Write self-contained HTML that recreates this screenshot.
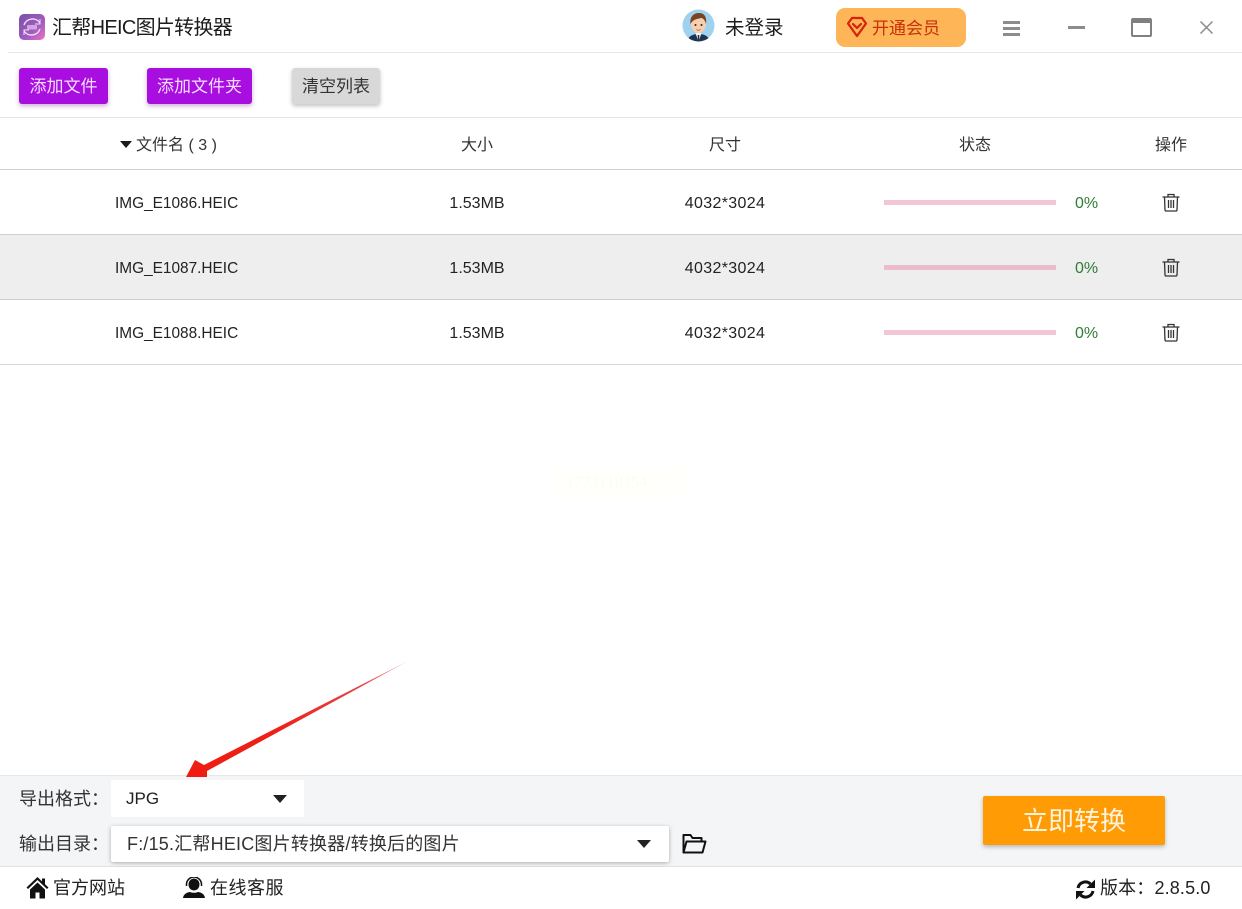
<!DOCTYPE html>
<html lang="zh">
<head>
<meta charset="utf-8">
<title>汇帮HEIC图片转换器</title>
<style>
html,body{margin:0;padding:0;background:#fff;}
#app{position:relative;width:1242px;height:909px;overflow:hidden;background:#fff;font-family:"Liberation Sans","Noto Sans CJK SC",sans-serif;color:#222;}
#app div,#app span,#app svg{position:absolute;}
.t{white-space:nowrap;line-height:24px;height:24px;}
.c{text-align:center;}
.line{left:0;width:1242px;height:1px;background:#d4d4d4;}
.btn{border-radius:3px;text-align:center;white-space:nowrap;}
.p{background:#a80ee0;color:#f6dcff;top:68px;height:36px;line-height:37px;font-size:17px;box-shadow:0 2px 5px rgba(120,60,150,.4);}
.bar{left:884px;width:172px;height:5px;background:#f2c6d6;}
.pct{left:1075px;width:26px;color:#2e7d32;font-size:16px;}
.name{left:115px;font-size:15.4px;}
.size{left:427px;width:100px;font-size:16px;}
.dim{left:675px;width:100px;font-size:16px;letter-spacing:.35px;}
.h{font-size:16px;color:#333;top:134px;}
</style>
</head>
<body>
<div id="app">
  <!-- Title bar -->
  <svg style="left:19px;top:14px" width="27" height="27" viewBox="0 0 27 27">
    <defs><linearGradient id="lg" x1="0" y1="0" x2="1" y2="1"><stop offset="0" stop-color="#7a4fa8"/><stop offset=".6" stop-color="#a35cc0"/><stop offset="1" stop-color="#ee74c4"/></linearGradient></defs>
    <rect width="26" height="26" rx="5" fill="url(#lg)"/>
    <path d="M5 11A9 9 0 0 1 21 9M21 15A9 9 0 0 1 5 17" fill="none" stroke="#f2e2f6" stroke-width="1.4"/>
    <path d="M21 5v5h-5M5 21v-5h5" fill="none" stroke="#f2e2f6" stroke-width="1"/>
    <rect x="8" y="11" width="10" height="4.500" rx="1" fill="#e6c9ee" opacity=".7"/>
  </svg>
  <div class="t" style="left:52px;top:16px;font-size:20px;color:#1c1c1c;letter-spacing:-.7px">汇帮HEIC图片转换器</div>

  <svg style="left:682px;top:9px" width="34" height="34" viewBox="0 0 34 34">
    <clipPath id="cp"><circle cx="16.500" cy="16.500" r="16"/></clipPath>
    <circle cx="16.500" cy="16.500" r="16" fill="#9fd2ee"/>
    <g clip-path="url(#cp)">
      <path d="M5 33c1-6 6-8 11.500-8S27 27 28 33z" fill="#1d3350"/>
      <path d="M13.500 24h6l-3 9z" fill="#f4f4f4"/>
      <rect x="15.700" y="26" width="1.600" height="7" fill="#1d3350"/>
      <ellipse cx="16.500" cy="15" rx="7.500" ry="9" fill="#f6cfae"/>
      <path d="M8.500 15c-1-7 3-11 8.500-11s8 4 7 11c-1-4-3-6-5-6-3 1-8 1-10.500 6z" fill="#7a4326"/>
      <circle cx="13.500" cy="16" r="1" fill="#3a2418"/><circle cx="19.500" cy="16" r="1" fill="#3a2418"/>
      <path d="M14.500 20.500q2 1.500 4 0" fill="none" stroke="#c0694f" stroke-width="1"/>
    </g>
  </svg>
  <div class="t" style="left:725px;top:16px;font-size:19.500px;color:#1c1c1c">未登录</div>

  <div style="left:836px;top:8px;width:130px;height:39px;background:#fdb557;border-radius:9px"></div>
  <svg style="left:847px;top:16px" width="20" height="22" viewBox="0 0 20 22">
    <path d="M5 2h10l4 5.500L10 20 1 7.500z" fill="none" stroke="#d8200c" stroke-width="2.200" stroke-linejoin="round"/>
    <path d="M6 8l4 4 4-4" fill="none" stroke="#d8200c" stroke-width="2.200" stroke-linecap="round" stroke-linejoin="round"/>
  </svg>
  <div class="t" style="left:872px;top:17px;font-size:17px;color:#c8300a">开通会员</div>

  <div style="left:1003px;top:21px;width:17px;height:2.500px;background:#8c8c8c"></div>
  <div style="left:1003px;top:27px;width:17px;height:2.500px;background:#8c8c8c"></div>
  <div style="left:1003px;top:33px;width:17px;height:2.500px;background:#8c8c8c"></div>
  <div style="left:1068px;top:26px;width:17px;height:2.500px;background:#8c8c8c"></div>
  <div style="left:1131px;top:18px;width:17px;height:12px;border:2px solid #808080;border-top:5px solid #808080;border-radius:2px"></div>
  <svg style="left:1199px;top:20px" width="15" height="15" viewBox="0 0 15 15"><path d="M1.500 1.500l12 12M13.500 1.500l-12 12" stroke="#8a8a8a" stroke-width="1.500" fill="none"/></svg>

  <div style="left:8px;top:52px;width:1234px;height:1px;background:#e6e6e6"></div>

  <!-- Toolbar -->
  <div class="btn p" style="left:19px;width:89px">添加文件</div>
  <div class="btn p" style="left:147px;width:105px">添加文件夹</div>
  <div class="btn" style="left:292px;top:68px;width:88px;height:36px;line-height:37px;font-size:17px;background:#d8d8d8;color:#333;box-shadow:0 2px 4px rgba(0,0,0,.25)">清空列表</div>

  <div class="line" style="top:117px;background:#e4e4e4"></div>

  <!-- Table header -->
  <svg style="left:120px;top:141px" width="12" height="7" viewBox="0 0 12 7"><path d="M0 0h12L6 7z" fill="#1a1a1a"/></svg>
  <div class="t h" style="left:136px">文件名 ( 3 )</div>
  <div class="t h c" style="left:427px;width:100px">大小</div>
  <div class="t h c" style="left:675px;width:100px">尺寸</div>
  <div class="t h c" style="left:925px;width:100px">状态</div>
  <div class="t h c" style="left:1121px;width:100px">操作</div>
  <div class="line" style="top:169px;background:#cfcfcf"></div>

  <!-- Row 1 -->
  <div class="t name" style="top:192px">IMG_E1086.HEIC</div>
  <div class="t c size" style="top:192px">1.53MB</div>
  <div class="t c dim" style="top:192px">4032*3024</div>
  <div class="bar" style="top:200px"></div>
  <div class="t pct" style="top:192px">0%</div>
  <svg style="left:1162px;top:193px" width="18" height="19" viewBox="0 0 18 19"><path d="M.5 4h17M6 4V1.500h6V4M2.500 4l.5 13a1.200 1.200 0 0 0 1.200 1h9.600a1.200 1.200 0 0 0 1.200-1l.5-13M6.500 7v8M9 7v8M11.500 7v8" fill="none" stroke="#333" stroke-width="1.300"/></svg>
  <div class="line" style="top:234px;background:#cfcfcf"></div>

  <!-- Row 2 -->
  <div style="left:0;top:235px;width:1242px;height:64px;background:#eeeeee"></div>
  <div class="t name" style="top:257px">IMG_E1087.HEIC</div>
  <div class="t c size" style="top:257px">1.53MB</div>
  <div class="t c dim" style="top:257px">4032*3024</div>
  <div class="bar" style="top:265px;background:#ecbccd"></div>
  <div class="t pct" style="top:257px">0%</div>
  <svg style="left:1162px;top:258px" width="18" height="19" viewBox="0 0 18 19"><path d="M.5 4h17M6 4V1.500h6V4M2.500 4l.5 13a1.200 1.200 0 0 0 1.200 1h9.600a1.200 1.200 0 0 0 1.200-1l.5-13M6.500 7v8M9 7v8M11.500 7v8" fill="none" stroke="#333" stroke-width="1.300"/></svg>
  <div class="line" style="top:299px;background:#cfcfcf"></div>

  <!-- Row 3 -->
  <div class="t name" style="top:322px">IMG_E1088.HEIC</div>
  <div class="t c size" style="top:322px">1.53MB</div>
  <div class="t c dim" style="top:322px">4032*3024</div>
  <div class="bar" style="top:330px"></div>
  <div class="t pct" style="top:322px">0%</div>
  <svg style="left:1162px;top:323px" width="18" height="19" viewBox="0 0 18 19"><path d="M.5 4h17M6 4V1.500h6V4M2.500 4l.5 13a1.200 1.200 0 0 0 1.200 1h9.600a1.200 1.200 0 0 0 1.200-1l.5-13M6.500 7v8M9 7v8M11.500 7v8" fill="none" stroke="#333" stroke-width="1.300"/></svg>
  <div class="line" style="top:364px;background:#d8d8d8"></div>

  <!-- Watermark -->
  <div style="left:555px;top:467px;width:131px;height:32px;background:#fffffb"></div>
  <div class="t" style="left:566px;top:471px;font-family:'Liberation Serif',serif;font-size:16px;color:#fcfcf4;letter-spacing:.2px">1773118354</div>

  <!-- Bottom panel -->
  <div style="left:0;top:775px;width:1242px;height:91px;background:#f4f5f6;border-top:1px solid #e8e8e8;box-sizing:border-box"></div>
  <div style="left:0;top:866px;width:1242px;height:1px;background:#e2e2e2"></div>

  <div class="t" style="left:19px;top:787px;font-size:18px;color:#333">导出格式：</div>
  <div style="left:111px;top:780px;width:193px;height:37px;background:#fff"></div>
  <div class="t" style="left:126px;top:787px;font-size:17px;color:#222">JPG</div>
  <svg style="left:273px;top:795px" width="14" height="8" viewBox="0 0 14 8"><path d="M0 0h14L7 8z" fill="#222"/></svg>

  <div class="t" style="left:19px;top:832px;font-size:18px;color:#333">输出目录：</div>
  <div style="left:111px;top:826px;width:558px;height:36px;background:#fff;border-radius:2px;box-shadow:0 1px 4px rgba(0,0,0,.3)"></div>
  <div class="t" style="left:127px;top:832px;font-size:18px;letter-spacing:.2px;color:#333">F:/15.汇帮HEIC图片转换器/转换后的图片</div>
  <svg style="left:637px;top:840px" width="14" height="8" viewBox="0 0 14 8"><path d="M0 0h14L7 8z" fill="#222"/></svg>
  <svg style="left:682px;top:833px" width="25" height="21" viewBox="0 0 25 21"><path d="M1.500 19.500V2h7l2 3h9v3.500M1.500 19.500h19L23.500 8.500H4.500z" fill="none" stroke="#111" stroke-width="2" stroke-linejoin="round"/></svg>

  <div class="btn" style="left:983px;top:796px;width:182px;height:49px;line-height:50px;background:#ff9b05;color:#fff3dc;font-size:26px;border-radius:2px;box-shadow:0 2px 4px rgba(0,0,0,.25)">立即转换</div>

  <!-- Footer -->
  <svg style="left:26px;top:876px" width="23" height="23" viewBox="0 0 23 23"><path d="M11.500 1L.5 11.500l1.500 1.500 9.500-9 9.500 9 1.500-1.500-3.500-3.300V2.500h-3v2.900z" fill="#111"/><path d="M4 13.500L11.500 6.500 19 13.500V22.500h-5.500v-6h-4v6H4z" fill="#111"/></svg>
  <div class="t" style="left:53px;top:876px;font-size:18px;color:#222">官方网站</div>
  <svg style="left:183px;top:877px" width="22" height="21" viewBox="0 0 22 21"><ellipse cx="11" cy="7.500" rx="5.500" ry="6" fill="#111"/><path d="M3.500 9V7.500a7.500 7.500 0 0 1 15 0V9" fill="none" stroke="#111" stroke-width="1.500"/><path d="M0 21c.5-3.500 3-5.500 7-6 2.500 1 5.500 1 8 0 4 .5 6.500 2.500 7 6z" fill="#111"/></svg>
  <div class="t" style="left:210px;top:876px;font-size:18px;letter-spacing:.5px;color:#222">在线客服</div>

  <svg style="left:1075px;top:879px" width="21" height="21" viewBox="0 0 21 21"><path d="M3 9A7.500 7.500 0 0 1 15.500 5M18 12A7.500 7.500 0 0 1 5.500 16" fill="none" stroke="#111" stroke-width="3"/><path d="M20 .5V9h-8.500zM1 20.500V12h8.500z" fill="#111"/></svg>
  <div class="t" style="left:1100px;top:876px;font-size:18px;letter-spacing:.15px;color:#222">版本：2.8.5.0</div>

  <!-- Red arrow -->
  <svg style="left:180px;top:655px" width="235" height="125" viewBox="0 0 235 125">
    <defs><linearGradient id="ar" x1="1" y1="0" x2="0" y2="1"><stop offset="0" stop-color="#e8b0b0"/><stop offset=".2" stop-color="#e44848"/><stop offset=".6" stop-color="#ee2018"/><stop offset="1" stop-color="#f01c10"/></linearGradient></defs>
    <path d="M228 6L24 110 15 105 6 122 27 122 27 116z" fill="url(#ar)"/>
  </svg>
</div>
</body>
</html>
